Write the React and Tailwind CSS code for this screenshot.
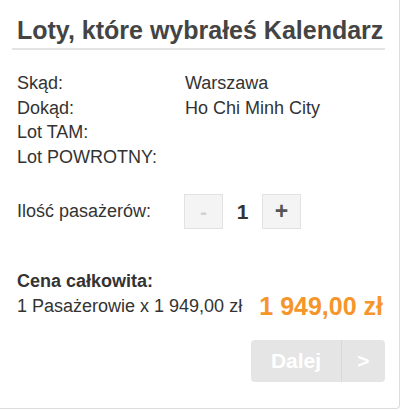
import React from 'react';

const rows = [
  ['Skąd:', 'Warszawa'],
  ['Dokąd:', 'Ho Chi Minh City'],
  ['Lot TAM:', ''],
  ['Lot POWROTNY:', ''],
];

export default function App() {
  return (
    <div className="w-[404px] h-[411px] bg-white font-['Liberation_Sans',Arial,sans-serif] text-[#333]">
      <div className="w-[400px] h-[409px] border-r border-b border-[#dcdcdc] rounded-br-[4px] pl-[12px] pr-[14px] pt-[15px]">
        <h1 className="whitespace-nowrap text-[25px] leading-[30px] font-bold text-[#444] px-[5px] pb-[3px] border-b-2 border-[#e3e3e3]">
          Loty, które wybrałeś Kalendarz
        </h1>

        <div className="px-[5px] pt-[21px] text-[18px] leading-[24.5px]">
          {rows.map(([label, value]) => (
            <div key={label} className="flex">
              <span className="w-[168px]">{label}</span>
              <span>{value}</span>
            </div>
          ))}
        </div>

        <div className="px-[5px] pt-[25px] flex items-center text-[18px]">
          <span className="w-[167px]">Ilość pasażerów:</span>
          <button className="w-[39px] h-[35px] border border-[#e2e2e2] bg-[#f4f4f4] text-[#d0d0d0] text-[20px] font-bold leading-none">
            -
          </button>
          <span className="w-[39px] text-center text-[21px] font-bold text-[#333]">1</span>
          <button className="w-[39px] h-[35px] border border-[#e2e2e2] bg-[#f4f4f4] text-[#555] text-[23px] font-bold leading-none">
            +
          </button>
        </div>

        <div className="pl-[5px] pr-[2px] pt-[40px]">
          <div className="text-[18px] leading-[25px] font-bold">Cena całkowita:</div>
          <div className="flex items-center justify-between">
            <span className="text-[18px] leading-[25px]">1 Pasażerowie x 1 949,00 zł</span>
            <span className="text-[25px] font-bold text-[#f5952a] leading-[25px]">1 949,00 zł</span>
          </div>
        </div>

        <div className="flex justify-end pt-[21px]">
          <div className="flex h-[42px] rounded-[4px] bg-[#e5e5e5] text-white text-[21px] font-bold">
            <span className="w-[91px] flex items-center justify-center border-r border-[#d8d8d8]">Dalej</span>
            <span className="w-[43px] flex items-center justify-center">&gt;</span>
          </div>
        </div>
      </div>
    </div>
  );
}
